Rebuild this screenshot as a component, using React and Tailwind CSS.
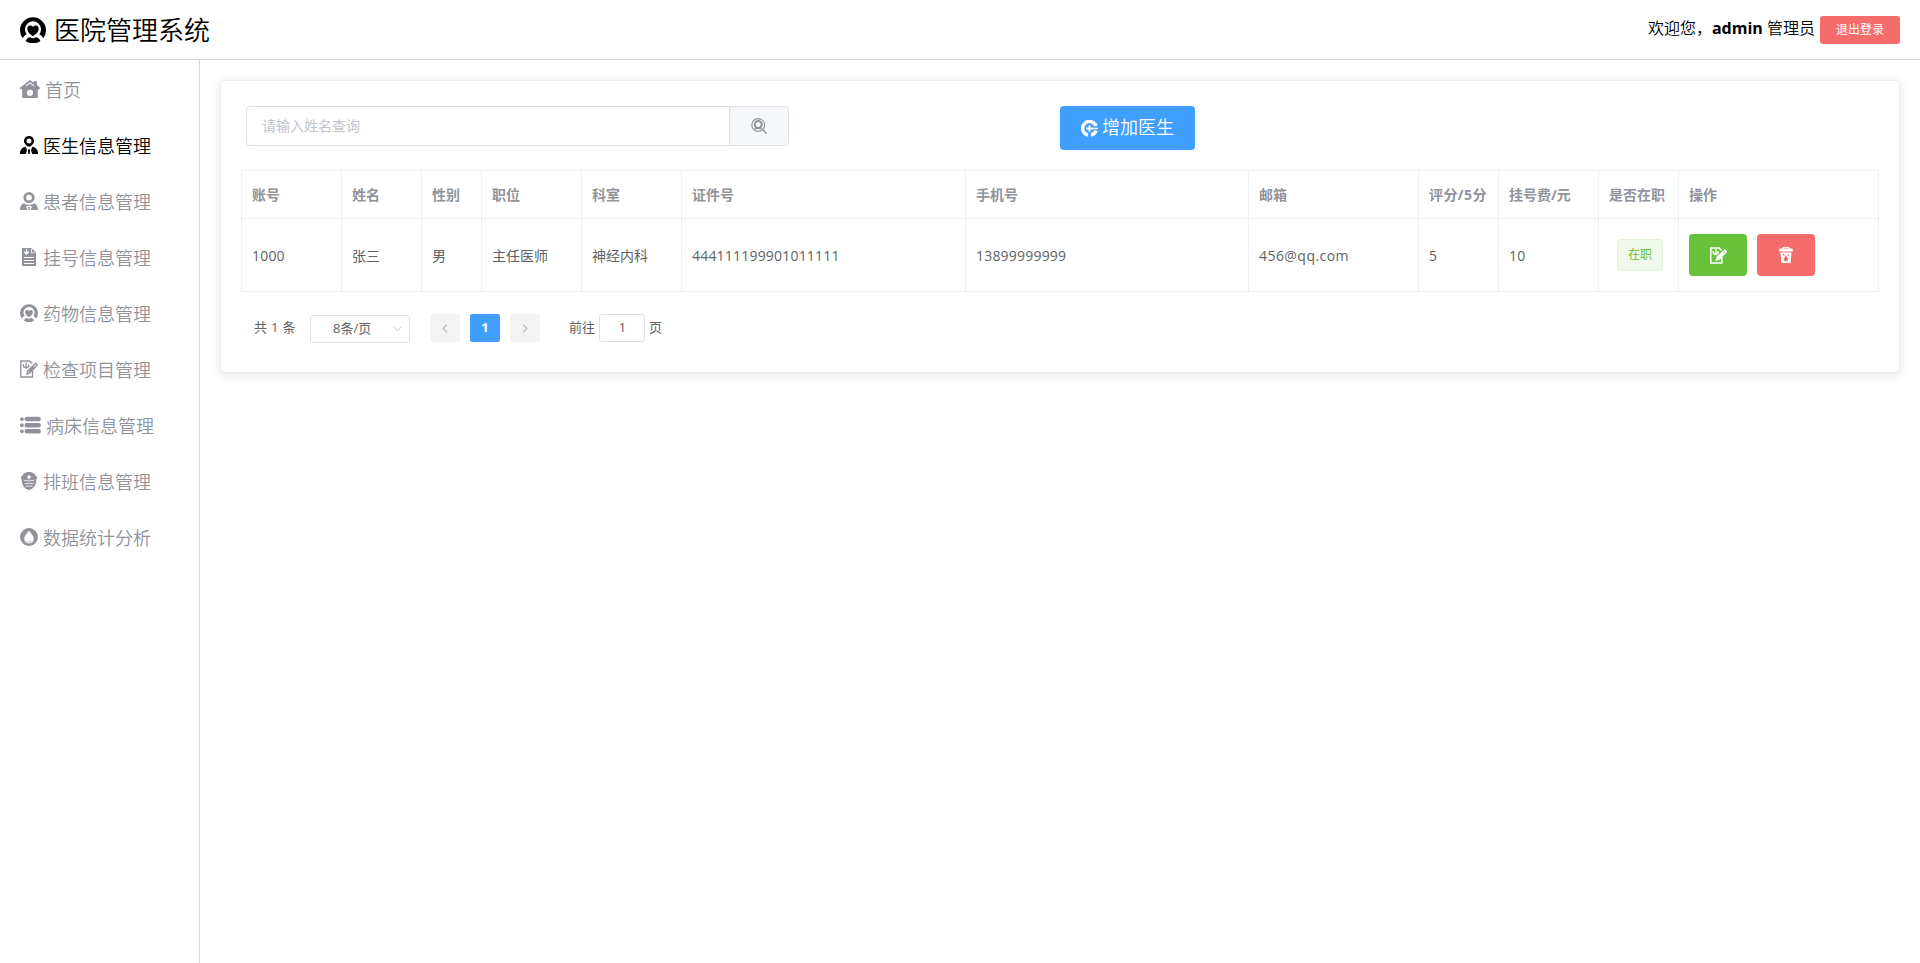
import React from "react";

function HeartBadge({ className }) {
  return (
    <svg viewBox="0 0 26 26" className={className} fill="currentColor">
      <path d="M2.700 21.200A13 13 0 1 1 23.300 21.200C22.400 19.400 21 18 19.300 17.300A8 8 0 1 0 6.700 17.300C5 18 3.600 19.400 2.700 21.200Z" />
      <path d="M13 19.200C10.500 17.200 7.300 15.200 7.300 11.700C7.300 8.300 11.300 7.500 13 10.100C14.700 7.500 18.700 8.300 18.700 11.700C18.700 15.200 15.500 17.200 13 19.200Z" />
      <path d="M5.500 24C6.500 21.800 8.500 20.300 10.200 20.200C12 21.500 14 21.500 15.800 20.200C17.500 20.300 19.500 21.800 20.500 24A13 13 0 0 1 5.500 24Z" />
    </svg>
  );
}

function HomeIcon({ className }) {
  return (
    <svg viewBox="0 0 20 18" className={className} fill="currentColor" fillRule="evenodd">
      <path d="M10 0L13.500 2.400V1.200H17V4.800L19.800 7.500V9.300H17.800V17C17.800 17.600 17.400 18 16.800 18H3.200C2.600 18 2.200 17.600 2.200 17V9.300H0.200V7.500ZM10 2.200L5.600 5.600L6.200 6.200L10 3.400L13.800 6.200L14.400 5.600ZM10 9.700A3.100 3.100 0 1 0 10 15.900A3.100 3.100 0 1 0 10 9.700Z" />
    </svg>
  );
}

function DoctorIcon({ className }) {
  return (
    <svg viewBox="0 0 18 18" className={className} fill="currentColor" fillRule="evenodd">
      <path d="M9 0A5 5 0 0 1 12.200 8.800L10.500 10.500H7.500L5.800 8.800A5 5 0 0 1 9 0ZM9 2.500A2.500 2.500 0 1 0 9 7.500A2.500 2.500 0 1 0 9 2.500Z" />
      <path d="M5.500 10.700L7 14L6 18H0V17C0 13.800 2.200 11.500 5.500 10.700ZM12.500 10.700L11 14L12 18H18V17C18 13.800 15.800 11.500 12.500 10.700Z" />
      <path d="M9 12.500L10 14.200L9.700 18H8.300L8 14.200Z" />
    </svg>
  );
}

function PatientIcon({ className }) {
  return (
    <svg viewBox="0 0 18 18" className={className} fill="currentColor" fillRule="evenodd">
      <path d="M9 0A5.600 5.600 0 1 1 9 11.200A5.600 5.600 0 1 1 9 0ZM9 2.700A2.900 2.900 0 1 0 9 8.500A2.900 2.900 0 1 0 9 2.700Z" />
      <path d="M3.800 11.200C6 13.300 12 13.300 14.200 11.200C16.800 12.200 18 14.500 18 18H10.500L12 14.500C10.500 13.500 7.500 13.500 6 14.500L7.500 18H0C0 14.500 1.200 12.200 3.800 11.200Z" />
      <path d="M8 15H10L9.500 18H8.500Z" />
    </svg>
  );
}

function RecordIcon({ className }) {
  return (
    <svg viewBox="0 0 18 18" className={className} fill="currentColor" fillRule="evenodd">
      <path d="M2 0H11.500L16 4.600V18H2ZM4 9V10H14V9ZM4 12V13H14V12ZM4 15V16H14V15ZM5.900 1.300V4L4 3.200V4.600L6.500 7L9 4.600V3.200L7.200 4V1.300ZM11 0.800V5.200H15.200V4.400H11.800V0.800Z" />
    </svg>
  );
}

function ExamIcon({ className, strokeWidth = 1.4 }) {
  return (
    <svg viewBox="0 0 18 18" className={className} fill="none" stroke="currentColor" strokeWidth={strokeWidth}>
      <path d="M12.500 10.500V17H0.800V1H9.500L12.200 3.500" />
      <path d="M6.200 2.500V6.800M3 4.200L3.900 7L6.200 8L8.700 6.500V4.500" />
      <path d="M7 13.800L7.800 10.800L15.700 3.200L17.300 4.800L9.800 12.800ZM8.800 11.800L14 6.500" />
    </svg>
  );
}

function BedIcon({ className }) {
  return (
    <svg viewBox="0 0 21 18" className={className} fill="currentColor">
      <rect x="4.600" y="0.800" width="16.200" height="4.500" rx="2" />
      <rect x="4.600" y="6.900" width="16.200" height="4.500" rx="2" />
      <rect x="4.600" y="13" width="16.200" height="4.500" rx="2" />
      <circle cx="1.900" cy="3.100" r="1.900" />
      <circle cx="1.900" cy="9.200" r="1.900" />
      <circle cx="1.900" cy="15.300" r="1.900" />
    </svg>
  );
}

function NurseIcon({ className }) {
  return (
    <svg viewBox="0 0 18 18" className={className} fill="currentColor" fillRule="evenodd">
      <path d="M9 0C12.500 0 15.300 1.700 15.800 4L17.200 5L16.200 8.500C16.200 13 13.500 17 9 18C4.500 17 1.800 13 1.800 8.500L0.800 5L2.200 4C2.700 1.700 5.500 0 9 0ZM8.300 3V4.400H6.900V5.800H8.300V7.200H9.700V5.800H11.100V4.400H9.700V3ZM3.800 8.200C5.500 9.700 12.500 9.700 14.200 8.200V7.400C12 8.800 6 8.800 3.800 7.400ZM4.500 11.200V12H13.500V11.200ZM5.500 13.700V14.500H12.500V13.700Z" />
    </svg>
  );
}

function DropIcon({ className }) {
  return (
    <svg viewBox="0 0 18 18" className={className} fill="currentColor" fillRule="evenodd">
      <path d="M9 0A9 9 0 1 1 9 18A9 9 0 1 1 9 0ZM9 2.300C7.800 5 4.300 7.300 4.300 10.900A4.700 4.700 0 0 0 13.700 10.900C13.700 7.300 10.200 5 9 2.300ZM6 12.800C7 14.200 11 14.200 12 12.800C11.300 15.200 6.700 15.200 6 12.800Z" />
    </svg>
  );
}

function SearchIcon({ className }) {
  return (
    <svg viewBox="0 0 16 16" className={className} fill="none" stroke="currentColor">
      <circle cx="7.200" cy="7" r="6.400" strokeWidth="1.100" />
      <path d="M11.600 11.500L15.500 15.500" strokeWidth="1.500" />
      <circle cx="7.200" cy="6.600" r="3.500" strokeWidth="2" />
      <path d="M3.700 11.200C4.700 9.800 9.700 9.800 10.700 11.200" strokeWidth="1.500" />
    </svg>
  );
}

function AddIcon({ className }) {
  return (
    <svg viewBox="0 0 16 16" className={className} fill="none" stroke="currentColor">
      <path d="M14.200 5.700A6.500 6.500 0 1 0 6.700 14.200" strokeWidth="3.200" />
      <path d="M14.200 10A6.500 6.500 0 0 1 9.300 14.200" strokeWidth="3.200" />
      <path d="M8 5V11M5 8H11" strokeWidth="1.800" />
      <path d="M10.500 8H16" strokeWidth="1.400" />
    </svg>
  );
}

function TrashIcon({ className }) {
  return (
    <svg viewBox="0 0 16 16" className={className} fill="currentColor" fillRule="evenodd">
      <path d="M5 0H11L11.500 1.500H14.500L15 4.600H1L1.500 1.500H4.500ZM6 1V1.600H10V1Z" />
      <path d="M2.500 5.600H13.500L12.700 16H3.300ZM5 7V8.500H6.500V7ZM9.500 7V8.500H11V7ZM8 8.200C7.200 10 5.900 10.800 5.900 12.300A2.100 2.100 0 0 0 10.100 12.300C10.100 10.800 8.800 10 8 8.200Z" />
    </svg>
  );
}

const menu = [
  { label: "首页", Icon: HomeIcon, size: "h-[18px] w-5" },
  { label: "医生信息管理", Icon: DoctorIcon, active: true },
  { label: "患者信息管理", Icon: PatientIcon },
  { label: "挂号信息管理", Icon: RecordIcon },
  { label: "药物信息管理", Icon: HeartBadge },
  { label: "检查项目管理", Icon: ExamIcon },
  { label: "病床信息管理", Icon: BedIcon, size: "h-[18px] w-[21px]" },
  { label: "排班信息管理", Icon: NurseIcon },
  { label: "数据统计分析", Icon: DropIcon },
];

const columns = [
  ["账号", "1000"],
  ["姓名", "张三"],
  ["性别", "男"],
  ["职位", "主任医师"],
  ["科室", "神经内科"],
  ["证件号", "444111199901011111"],
  ["手机号", "13899999999"],
  ["邮箱", "456@qq.com", "tracking-[0.45px]"],
  ["评分/5分", "5"],
  ["挂号费/元", "10"],
];

const rowGrid =
  "grid grid-cols-[100px_80px_60px_100px_100px_284px_283px_170px_80px_100px_80px_200px]";
const cell = "flex items-center border-r border-b border-[#ebeef5] pl-[10px] whitespace-nowrap";

export default function App() {
  return (
    <div className="flex h-[963px] w-full flex-col overflow-hidden bg-white font-['Open_Sans','Noto_Sans_CJK_SC',sans-serif] text-black">
      <header className="flex h-[60px] shrink-0 items-center justify-between border-b border-[#d3d3d3] px-5">
        <div className="flex items-center gap-[8px]">
          <HeartBadge className="size-[26px]" />
          <h1 className="pt-px text-[26px] leading-[34px] font-[350]">医院管理系统</h1>
        </div>
        <div className="flex items-center gap-[5px]">
          <p className="pb-[3px] text-[16px] leading-6">
            <span className="font-[350]">欢迎您，</span><b>admin</b> <span className="font-[350]">管理员</span>
          </p>
          <button className="h-7 w-20 rounded-[3px] bg-[#f56c6c] text-[12px] leading-none text-white">
            退出登录
          </button>
        </div>
      </header>

      <div className="flex min-h-0 flex-1">
        <nav className="w-[200px] shrink-0 border-r border-[#d3d3d3] pt-px">
          {menu.map(({ label, Icon, active, size }) => (
            <a
              key={label}
              className={`flex h-14 items-center gap-[5px] pl-5 text-[18px] font-[350] ${active ? "text-black" : "text-[#909399]"}`}
            >
              <Icon className={size || "size-[18px]"} />
              <span className="pt-px leading-6">{label}</span>
            </a>
          ))}
        </nav>

        <main className="min-w-0 flex-1 p-5">
          <section className="h-[293px] rounded-[4px] border border-[#ebeef5] bg-white px-5 pt-[25px] shadow-[0_2px_12px_0_rgba(0,0,0,0.1)]">
            <div className="flex h-11 items-start pl-[5px]">
              <div className="flex h-10 w-[543px] overflow-hidden rounded-[4px] border border-[#dcdfe6] text-[14px]">
                <div className="flex flex-1 items-center pb-px pl-[15px] text-[#c0c4cc]">请输入姓名查询</div>
                <button className="flex w-[59px] items-center justify-center border-l border-[#dcdfe6] bg-[#f5f7fa] text-[#909399]">
                  <SearchIcon className="size-4" />
                </button>
              </div>
              <button className="ml-[271px] flex h-11 w-[135px] items-center justify-center gap-[4px] rounded-[4px] bg-[#409eff] text-[18px] font-[350] text-white">
                <AddIcon className="size-[17px]" />
                <span className="pb-px">增加医生</span>
              </button>
            </div>

            <div className="mt-5 w-[1638px] border-t border-l border-[#ebeef5] text-[14px] text-[#606266]">
              <div className={`${rowGrid} h-12 font-bold text-[#909399]`}>
                {columns.map(([title]) => (
                  <div key={title} className={`${cell} ${title === "评分/5分" ? "tracking-[0.4px]" : ""}`}>{title}</div>
                ))}
                <div className={cell}>是否在职</div>
                <div className={cell}>操作</div>
              </div>
              <div className={`${rowGrid} h-[73px]`}>
                {columns.map(([title, value, tracking]) => (
                  <div key={title} className={`${cell} ${/^\p{Script=Han}/u.test(value) ? "" : tracking || "tracking-[0.2px]"}`}>
                    {value}
                  </div>
                ))}
                <div className={cell}>
                  <span className="ml-2 flex h-8 w-[46px] items-center justify-center rounded-[4px] border border-[#e1f3d8] bg-[#f0f9eb] text-[12px] text-[#67c23a]">
                    在职
                  </span>
                </div>
                <div className={`${cell} gap-[10px]`}>
                  <button className="flex h-[42px] w-[58px] items-center justify-center rounded-[4px] bg-[#67c23a] text-white">
                    <ExamIcon className="size-[17px]" strokeWidth={1.7} />
                  </button>
                  <button className="flex h-[42px] w-[58px] items-center justify-center rounded-[4px] bg-[#f56c6c] text-white">
                    <TrashIcon className="size-4" />
                  </button>
                </div>
              </div>
            </div>

            <div className="mt-[22px] flex h-7 items-center pl-3 text-[13px] text-[#606266]">
              <span className="w-[57px] pl-px tracking-[0.3px]">共 1 条</span>
              <div className="mt-[2px] flex h-7 w-[100px] items-center rounded-[3px] border border-[#dcdfe6] pl-[22px]">
                <span className="flex-1 pb-px">8条/页</span>
                <svg viewBox="0 0 10 6" className="mr-[7px] h-[6px] w-[9px]" fill="none" stroke="#c0c4cc">
                  <path d="M1 0.800L5 5L9 0.800" />
                </svg>
              </div>
              <button className="ml-5 flex h-7 w-[30px] items-center justify-center rounded-[2px] bg-[#f4f4f5]">
                <svg viewBox="0 0 6 10" className="h-[9px] w-[6px]" fill="none" stroke="#c0c4cc" strokeWidth="1.800">
                  <path d="M5 0.800L1 5L5 9.200" />
                </svg>
              </button>
              <button className="ml-[10px] h-7 w-[30px] rounded-[2px] bg-[#409eff] font-bold text-white">1</button>
              <button className="ml-[10px] flex h-7 w-[30px] items-center justify-center rounded-[2px] bg-[#f4f4f5]">
                <svg viewBox="0 0 6 10" className="h-[9px] w-[6px]" fill="none" stroke="#c0c4cc" strokeWidth="1.800">
                  <path d="M1 0.800L5 5L1 9.200" />
                </svg>
              </button>
              <span className="ml-7 w-[31px] pl-px">前往</span>
              <div className="flex h-7 w-[46px] items-center justify-center rounded-[3px] border border-[#dcdfe6] pl-px">1</div>
              <span className="ml-1">页</span>
            </div>
          </section>
        </main>
      </div>
    </div>
  );
}
